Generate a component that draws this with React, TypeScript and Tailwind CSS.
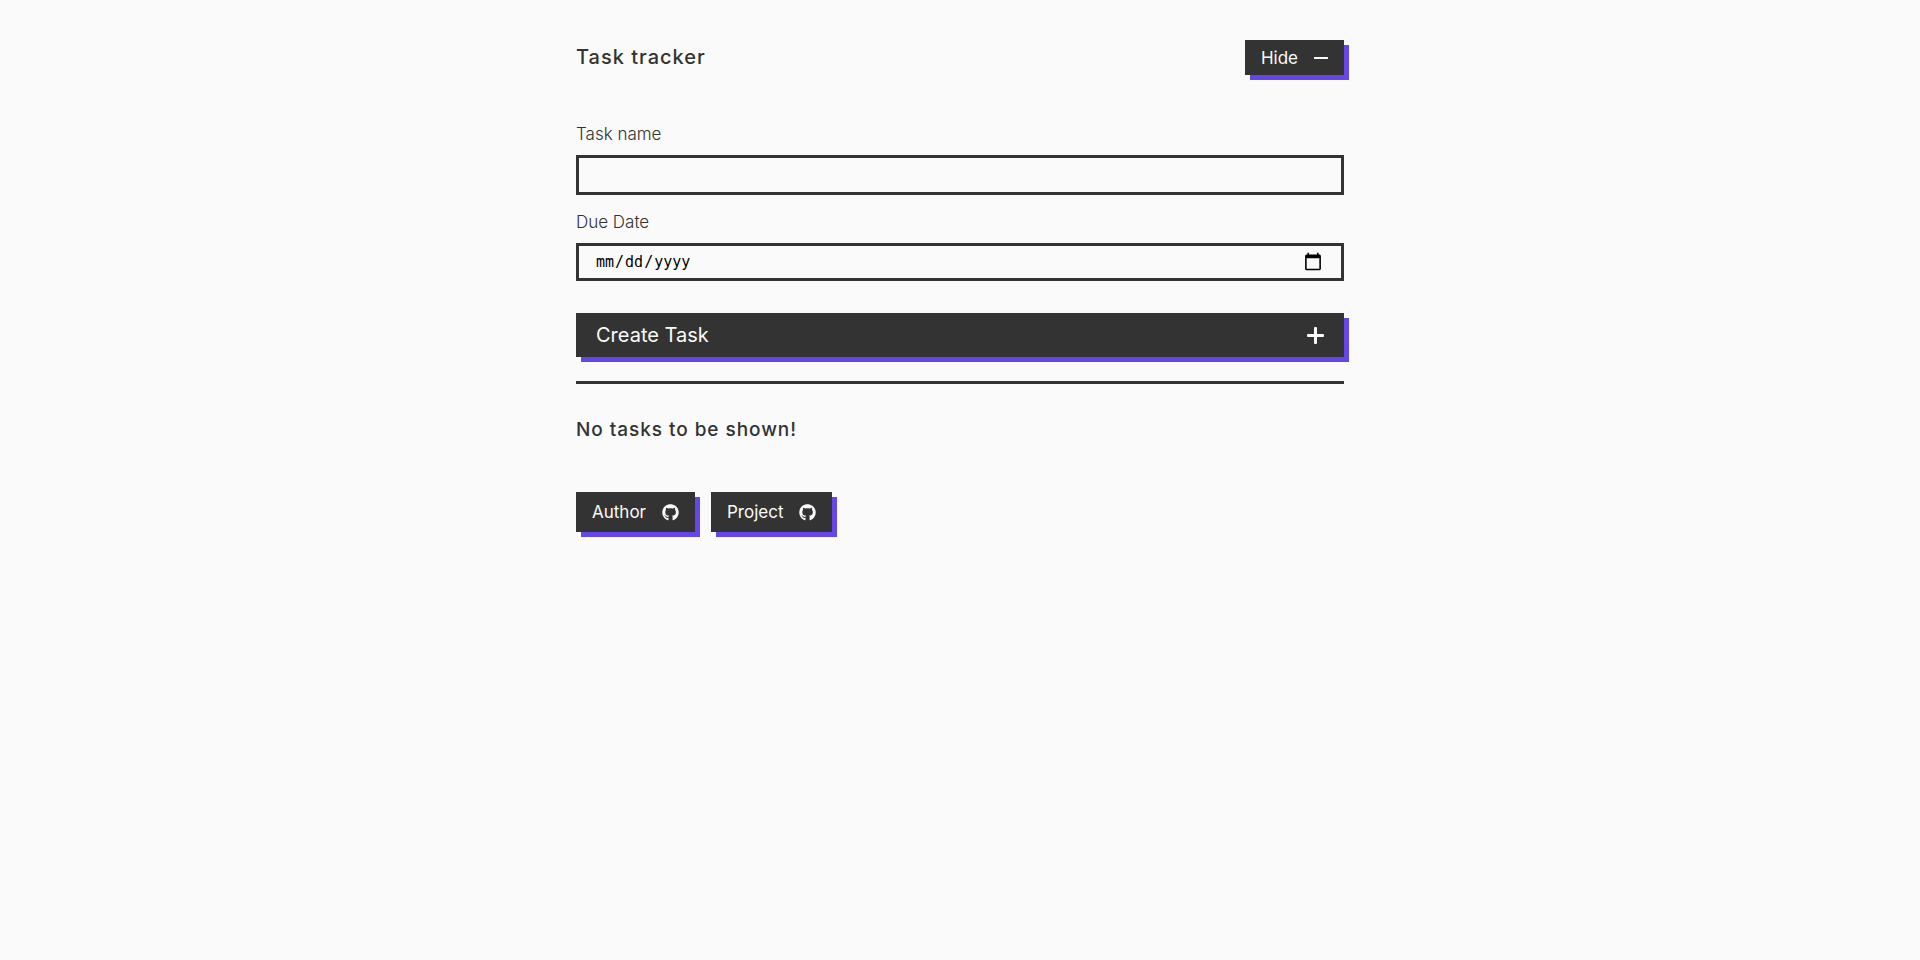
import { useState, type ReactNode } from "react";
import { FaGithub } from "react-icons/fa";

const raised = "bg-[#333333] text-[#fafafa] shadow-[5px_5px_0_#6446ea]";

function MinusIcon() {
  return (
    <svg viewBox="0 0 14 14" className="size-3.5" fill="currentColor" aria-hidden="true">
      <rect x="0" y="6" width="14" height="2" rx="0.6" />
    </svg>
  );
}

function PlusIcon() {
  return (
    <svg viewBox="0 0 17 17" className="size-[17px]" fill="currentColor" aria-hidden="true">
      <rect x="0" y="7" width="17" height="3" rx="1" />
      <rect x="7" y="0" width="3" height="17" rx="1" />
    </svg>
  );
}

function RepoLink({ href, children }: { href: string; children: ReactNode }) {
  return (
    <a href={href} className={`flex h-10 items-center gap-4 px-4 text-[17px] leading-6 ${raised}`}>
      {children}
      <FaGithub className="size-[17px]" aria-hidden="true" />
    </a>
  );
}

export default function App() {
  const [open, setOpen] = useState(true);
  const [name, setName] = useState("");
  const [tasks, setTasks] = useState<string[]>([]);

  return (
    <div className="min-h-screen bg-[#fafafa] px-6 py-10 font-['Inter','Open_Sans',sans-serif] text-[#333333]">
      <main className="mx-auto max-w-3xl">
        <header className="flex items-center justify-between">
          <h1 className="text-[20px] leading-[35px] font-medium tracking-wider">Task tracker</h1>
          <button
            type="button"
            onClick={() => setOpen(!open)}
            className={`flex h-[35px] items-center gap-4 px-4 text-[17px] leading-6 ${raised}`}
          >
            {open ? "Hide" : "Show"}
            {open ? <MinusIcon /> : <PlusIcon />}
          </button>
        </header>

        {open && (
          <form
            className="mt-12 flex flex-col"
            onSubmit={(event) => {
              event.preventDefault();
              if (name.trim()) {
                setTasks([...tasks, name.trim()]);
                setName("");
              }
            }}
          >
            <label htmlFor="task-name" className="text-[17px] leading-[22px] font-light">Task name</label>
            <input
              id="task-name"
              type="text"
              value={name}
              onChange={(event) => setName(event.target.value)}
              className="mt-2.5 h-10 border-[3px] border-[#333333] px-4 outline-none"
            />
            <label htmlFor="due-date" className="mt-4 text-[17px] leading-[22px] font-light">Due Date</label>
            <input
              id="due-date"
              type="date"
              className="mt-2.5 h-[38px] border-[3px] border-[#333333] px-4 font-['DejaVu_Sans_Mono',monospace] text-[15px] text-black outline-none [&::-webkit-calendar-picker-indicator]:size-5"
            />
            <button
              type="submit"
              className={`mt-8 flex h-11 items-center justify-between px-5 text-[20px] leading-6 ${raised}`}
            >
              Create Task
              <PlusIcon />
            </button>
          </form>
        )}

        <hr className="mt-6 border-t-[3px] border-[#333333]" />

        {tasks.length === 0 ? (
          <h2 className="mt-8 text-[19px] leading-7 font-medium tracking-wider">No tasks to be shown!</h2>
        ) : (
          <ul className="mt-8 text-[19px] leading-7">
            {tasks.map((task, index) => <li key={index}>{task}</li>)}
          </ul>
        )}

        <footer className="mt-12 flex gap-4">
          <RepoLink href="#author">Author</RepoLink>
          <RepoLink href="#project">Project</RepoLink>
        </footer>
      </main>
    </div>
  );
}
